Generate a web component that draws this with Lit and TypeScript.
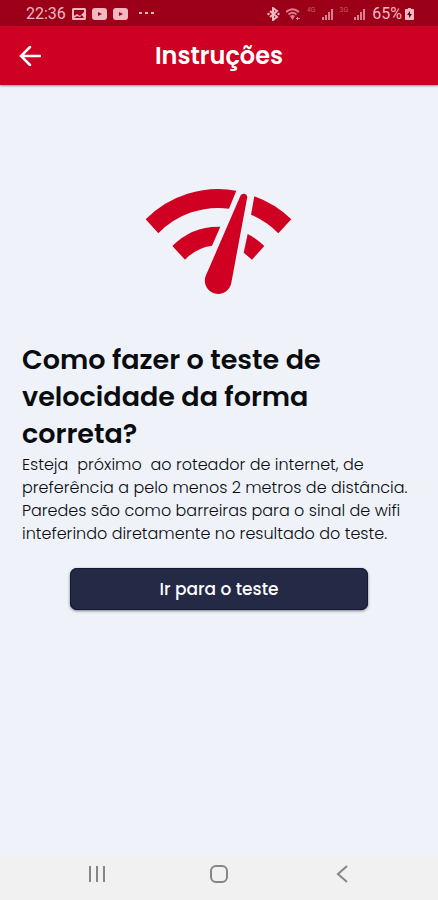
import { LitElement, html, css, svg } from "lit";
import { customElement } from "lit/decorators.js";

const signal = svg`<path d="M0 12V9h2v3zM3 12V7h2v5zM6 12V4h2v8zM9 12V1h2v11z" />`;

@customElement("status-bar")
class StatusBar extends LitElement {
  static styles = css`
    :host {
      display: flex;
      justify-content: space-between;
      align-items: center;
      height: 26px;
      padding: 0 24px 0 26px;
      background: #9c0019;
      color: #f3b9c0;
      font: 16px/26px Roboto, sans-serif;
    }
    .group {
      display: flex;
      align-items: center;
      gap: 6px;
      padding-top: 2px;
    }
    svg {
      display: block;
      fill: currentColor;
    }
    .dots {
      margin-left: 5px;
    }
    .dim {
      color: #d9808c;
    }
    .net {
      color: #c85c6a;
      font-size: 7px;
      line-height: 8px;
      padding-bottom: 8px;
    }
    .level {
      display: flex;
      align-items: center;
      gap: 3px;
    }
  `;

  render() {
    return html`
      <div class="group">
        <span>22:36</span>
        <svg width="14" height="12" viewBox="0 0 14 12">
          <path fill-rule="evenodd" d="M1.500 0h11a1.500 1.500 0 0 1 1.500 1.500v9a1.500 1.500 0 0 1-1.500 1.500h-11A1.500 1.500 0 0 1 0 10.500v-9A1.500 1.500 0 0 1 1.500 0zM2 2v6l3-2 3 2 4-4V2zM2 10h10L10 7 8 9 5 8z" />
        </svg>
        <svg width="15" height="12" viewBox="0 0 15 12">
          <path fill-rule="evenodd" d="M3 0h9a3 3 0 0 1 3 3v6a3 3 0 0 1-3 3H3a3 3 0 0 1-3-3V3a3 3 0 0 1 3-3zM6 4v4l4-2z" />
        </svg>
        <svg width="15" height="12" viewBox="0 0 15 12">
          <path fill-rule="evenodd" d="M3 0h9a3 3 0 0 1 3 3v6a3 3 0 0 1-3 3H3a3 3 0 0 1-3-3V3a3 3 0 0 1 3-3zM6 4v4l4-2z" />
        </svg>
        <svg class="dots" width="16" height="4" viewBox="0 0 16 4">
          <path d="M0 0h3v2H0zM6 0h3v2H6zM12 0h3v2h-3z" />
        </svg>
      </div>
      <div class="group">
        <svg width="13" height="14" viewBox="0 0 13 14">
          <path d="M3 4l7 6-4 3V1l4 3-7 6" fill="none" stroke="currentColor" stroke-width="2" />
          <circle cx="1.500" cy="7" r="1.200" /><circle cx="11.500" cy="7" r="1.200" />
        </svg>
        <svg class="dim" width="15" height="13" viewBox="0 0 15 13">
          <path d="M0 4Q6.500-1.500 13 4M2.500 6.500Q6.500 3 10.500 6.500" fill="none" stroke="currentColor" stroke-width="1.800" />
          <path d="M4 8Q6.500 6 9 8l-2.500 4zM10 10h1V9h1v1h2v1h-2v1h-1v-1h-1z" />
        </svg>
        <span class="net">4G</span>
        <svg class="dim" width="12" height="12" viewBox="0 0 12 12">${signal}</svg>
        <span class="net">3G</span>
        <svg class="dim" width="12" height="12" viewBox="0 0 12 12">${signal}</svg>
        <div class="level">
          <span>65%</span>
          <svg width="9" height="12" viewBox="0 0 9 12">
            <path d="M3 0h3v1h2a1 1 0 0 1 1 1v9a1 1 0 0 1-1 1H1a1 1 0 0 1-1-1V2a1 1 0 0 1 1-1h2z" />
            <path d="M5 3L2 7h2v3l3-4H5z" fill="#5a0010" />
          </svg>
        </div>
      </div>
    `;
  }
}

@customElement("app-root")
class AppRoot extends LitElement {
  static styles = css`
    :host {
      display: flex;
      flex-direction: column;
      min-height: 100vh;
      background: #eff3f9;
      color: #0a0c10;
      font-family: Poppins, Inter, sans-serif;
    }
    svg {
      display: block;
    }
    button {
      border: 0;
      padding: 0;
      background: none;
      font-family: inherit;
      cursor: pointer;
    }
    header {
      display: grid;
      grid-template-columns: 60px 1fr 60px;
      align-items: center;
      height: 59px;
      background: #ce0023;
      color: #fff;
      box-shadow: 0 1px 2px #00000066;
    }
    .back {
      display: flex;
      justify-content: center;
      padding: 12px 0;
    }
    h1 {
      margin: 0;
      font-size: 24px;
      line-height: 32px;
      font-weight: 600;
      text-align: center;
    }
    main {
      flex: 1;
      display: flex;
      flex-direction: column;
      padding: 90px 22px 24px;
    }
    .gauge {
      align-self: center;
      margin-bottom: 36px;
    }
    h2 {
      margin: 0 0 1px;
      max-width: 320px;
      font-size: 27px;
      line-height: 37px;
      font-weight: 600;
    }
    p {
      margin: 0 0 23px;
      font-size: 16px;
      line-height: 23px;
      font-weight: 300;
      white-space: pre-wrap;
      color: #0a0c10;
    }
    .go {
      align-self: center;
      width: 298px;
      max-width: 100%;
      height: 42px;
      border-radius: 7px;
      background: #242945;
      box-shadow: 0 1px 3px #00000080, inset 0 0 0 1px #141833;
      color: #fff;
      font-size: 17px;
      line-height: 24px;
      font-weight: 500;
    }
    nav {
      display: flex;
      justify-content: space-between;
      align-items: center;
      padding: 7px 84px 13px;
      background: #f1f1f1;
    }
    nav svg {
      fill: none;
      stroke: #858585;
      stroke-width: 2;
    }
  `;

  render() {
    return html`
      <status-bar></status-bar>
      <header>
        <button class="back" aria-label="Voltar">
          <svg width="22" height="20" viewBox="0 0 22 20" fill="none" stroke="#fff" stroke-width="2.500" stroke-linecap="round">
            <path d="M21 10H2M11 1L2 10l9 9" />
          </svg>
        </button>
        <h1>Instruções</h1>
      </header>
      <main>
        <svg class="gauge" width="180" height="130" viewBox="0 0 540 390" fill="#d00023" aria-hidden="true">
          <path d="M50 133A307 307 0 0 1 322 47L300 101A250 250 0 0 0 88 175Z" />
          <path d="M376 64A307 307 0 0 1 487 133L448 175A250 250 0 0 0 366 119Z" />
          <path d="M130 213A194 194 0 0 1 274 155L249 212A138 138 0 0 0 168 254Z" />
          <path d="M356 177A194 194 0 0 1 406 213L369 254L344 233Z" />
          <path d="M335 61A11 11 0 0 1 355 65L307 323A40 40 0 1 1 230 303Z" />
        </svg>
        <h2>Como fazer o teste de velocidade da forma correta?</h2>
        <p>Esteja  próximo  ao roteador de internet, de preferência a pelo menos 2 metros de distância. Paredes são como barreiras para o sinal de wifi inteferindo diretamente no resultado do teste.</p>
        <button class="go">Ir para o teste</button>
      </main>
      <nav>
        <button aria-label="Recentes">
          <svg width="26" height="26" viewBox="0 0 26 26"><path d="M6 5v16M13 5v16M20 5v16" /></svg>
        </button>
        <button aria-label="Início">
          <svg width="26" height="26" viewBox="0 0 26 26"><rect x="5" y="5" width="16" height="16" rx="5" /></svg>
        </button>
        <button aria-label="Voltar à tela anterior">
          <svg width="26" height="26" viewBox="0 0 26 26"><path d="M19 5l-9 8 9 8" /></svg>
        </button>
      </nav>
    `;
  }
}
